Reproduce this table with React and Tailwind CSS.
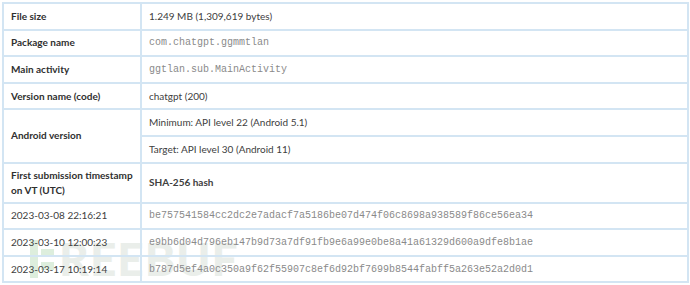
import React from "react";

const rows = [
  { label: "File size", value: "1.249 MB (1,309,619 bytes)" },
  { label: "Package name", value: "com.chatgpt.ggmmtlan", mono: true },
  { label: "Main activity", value: "ggtlan.sub.MainActivity", mono: true },
  { label: "Version name (code)", value: "chatgpt (200)" },
];

const hashes = [
  ["2023-03-08 22:16:21", "be757541584cc2dc2e7adacf7a5186be07d474f06c8698a938589f86ce56ea34"],
  ["2023-03-10 12:00:23", "e9bb6d04d796eb147b9d73a7df91fb9e6a99e0be8a41a61329d600a9dfe8b1ae"],
  ["2023-03-17 10:19:14", "b787d5ef4a0c350a9f62f55907c8ef6d92bf7699b8544fabff5a263e52a2d0d1"],
];

const cell = "border-2 border-[#d3e5f3] pl-[7px] pr-[2px] align-middle";
const label = `${cell} w-[138px] font-bold text-[#2f2f2f]`;
const value = `${cell} text-[#404040]`;
const mono = `${cell} text-[#8a8a8a] text-[10px] font-['Liberation_Mono',monospace]`;

export default function App() {
  return (
    <div className="relative w-[690px] h-[285px] bg-white pt-[2px] pl-[2px] font-['Lato',sans-serif] text-[10px]">
      {/* faint watermark, sits behind the table */}
      <div className="pointer-events-none absolute left-[30px] top-[236px] flex items-center gap-[5px] text-[46px] leading-none font-black tracking-[1px] text-[#eaeeea]">
        <div className="flex items-center gap-[3px]">
          <div className="w-[8px] h-[38px] bg-[#ddeedd]" />
          <div className="flex flex-col gap-[5px]">
            <div className="w-[13px] h-[8px] bg-[#ddeedd]" />
            <div className="w-[13px] h-[8px] bg-[#ddeedd]" />
          </div>
        </div>
        <span>REEBUF</span>
      </div>
      <table className="relative w-[687px] border-collapse">
        <tbody>
          {rows.map((r) => (
            <tr key={r.label} className="h-[26.6px]">
              <td className={label}>{r.label}</td>
              <td className={r.mono ? mono : value}>{r.value}</td>
            </tr>
          ))}
          <tr className="h-[26.6px]">
            <td rowSpan={2} className={label}>Android version</td>
            <td className={value}>Minimum: API level 22 (Android 5.1)</td>
          </tr>
          <tr className="h-[26.6px]">
            <td className={value}>Target: API level 30 (Android 11)</td>
          </tr>
          <tr className="h-[40px]">
            <td className={`${label} leading-[15px]`}>First submission timestamp on VT (UTC)</td>
            <td className={`${value} font-bold text-[#2f2f2f]`}>SHA-256 hash</td>
          </tr>
          {hashes.map(([d, h]) => (
            <tr key={h} className="h-[26.6px]">
              <td className={`${cell} text-[#404040]`}>{d}</td>
              <td className={mono}>{h}</td>
            </tr>
          ))}
        </tbody>
      </table>
    </div>
  );
}
